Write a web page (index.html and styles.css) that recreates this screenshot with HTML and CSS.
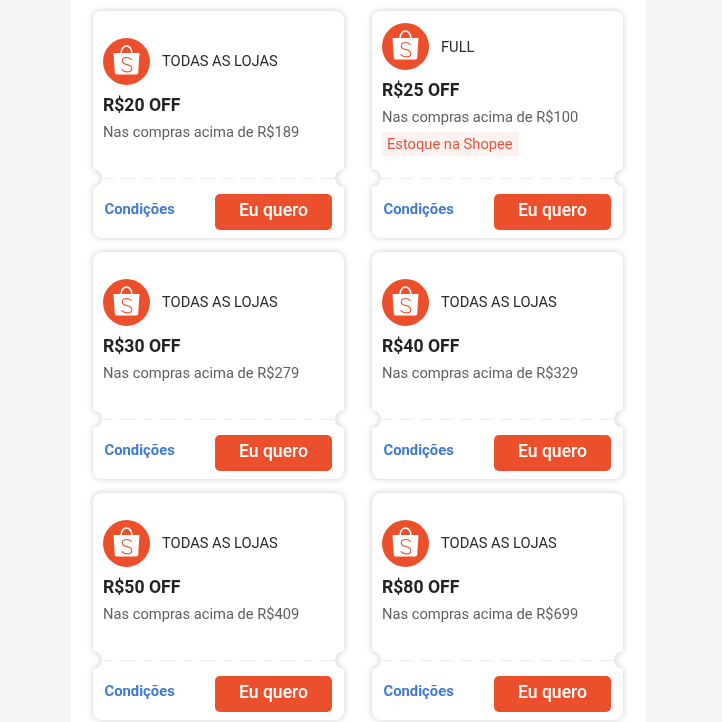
FILE: index.html
```html
<!DOCTYPE html>
<html lang="pt-BR">
<head>
<meta charset="UTF-8" />
<title>Cupons</title>
<link rel="stylesheet" href="styles.css">
</head>
<body>

<svg class="sprite" width="0" height="0" aria-hidden="true">
  <symbol id="shopeeLogo" viewBox="0 0 47 47">
    <circle cx="23.5" cy="23.5" r="23.5" fill="#ec4f2c"/>
    <path d="M10.500 15h26l-1.300 19.700a2 2 0 0 1-2 1.800H13.800a2 2 0 0 1-2-1.800z" fill="#fff"/>
    <path d="M18.200 15c0-4 2.300-7 5.300-7s5.300 3 5.300 7" fill="none" stroke="#fff" stroke-width="1.600"/>
    <path d="M28.200 21.400c-1-1.200-2.700-1.900-4.500-1.900-2.500 0-4.400 1.300-4.400 3.400 0 4.700 9.500 2.600 9.500 7.500 0 2.200-2.100 3.500-4.800 3.500-2 0-3.900-.8-5-2.200" fill="none" stroke="#ec4f2c" stroke-width="1.100" stroke-linecap="round"/>
  </symbol>
</svg>

<main class="page">
  <div class="coupon-grid">

    <article class="coupon">
      <div class="coupon-body">
        <div class="coupon-info">
          <div class="store"><svg class="logo"><use href="#shopeeLogo"/></svg><span>TODAS AS LOJAS</span></div>
          <h3>R$20 OFF</h3>
          <p>Nas compras acima de R$189</p>
        </div>
        <div class="coupon-actions"><a class="terms">Condições</a><button class="btn-want">Eu quero</button></div>
      </div>
    </article>

    <article class="coupon">
      <div class="coupon-body">
        <div class="coupon-info">
          <div class="store"><svg class="logo"><use href="#shopeeLogo"/></svg><span>FULL</span></div>
          <h3>R$25 OFF</h3>
          <p>Nas compras acima de R$100</p>
          <span class="tag">Estoque na Shopee</span>
        </div>
        <div class="coupon-actions"><a class="terms">Condições</a><button class="btn-want">Eu quero</button></div>
      </div>
    </article>

    <article class="coupon">
      <div class="coupon-body">
        <div class="coupon-info">
          <div class="store"><svg class="logo"><use href="#shopeeLogo"/></svg><span>TODAS AS LOJAS</span></div>
          <h3>R$30 OFF</h3>
          <p>Nas compras acima de R$279</p>
        </div>
        <div class="coupon-actions"><a class="terms">Condições</a><button class="btn-want">Eu quero</button></div>
      </div>
    </article>

    <article class="coupon">
      <div class="coupon-body">
        <div class="coupon-info">
          <div class="store"><svg class="logo"><use href="#shopeeLogo"/></svg><span>TODAS AS LOJAS</span></div>
          <h3>R$40 OFF</h3>
          <p>Nas compras acima de R$329</p>
        </div>
        <div class="coupon-actions"><a class="terms">Condições</a><button class="btn-want">Eu quero</button></div>
      </div>
    </article>

    <article class="coupon">
      <div class="coupon-body">
        <div class="coupon-info">
          <div class="store"><svg class="logo"><use href="#shopeeLogo"/></svg><span>TODAS AS LOJAS</span></div>
          <h3>R$50 OFF</h3>
          <p>Nas compras acima de R$409</p>
        </div>
        <div class="coupon-actions"><a class="terms">Condições</a><button class="btn-want">Eu quero</button></div>
      </div>
    </article>

    <article class="coupon">
      <div class="coupon-body">
        <div class="coupon-info">
          <div class="store"><svg class="logo"><use href="#shopeeLogo"/></svg><span>TODAS AS LOJAS</span></div>
          <h3>R$80 OFF</h3>
          <p>Nas compras acima de R$699</p>
        </div>
        <div class="coupon-actions"><a class="terms">Condições</a><button class="btn-want">Eu quero</button></div>
      </div>
    </article>

  </div>
</main>

</body>
</html>
```

FILE: styles.css
```css
html, body { margin: 0; height: 100%; overflow: hidden; }
body { background: #f5f5f5; font-family: Roboto, "Liberation Sans", sans-serif; color: #222; }
.sprite { position: absolute; }

.page { width: 575px; height: 722px; margin-left: 71px; background: #fff; padding: 11px 22px 0; box-sizing: border-box; }
.coupon-grid { display: grid; grid-template-columns: 251px 251px; column-gap: 28px; row-gap: 14px; }

/* sombra fica no pai porque o mask corta o filho */
.coupon { height: 227px; filter: drop-shadow(0 0 3px rgba(0,0,0,.2)); }
.coupon-body {
  height: 100%; background: #fff; border-radius: 8px;
  display: flex; flex-direction: column;
  -webkit-mask-image: radial-gradient(circle 9px at 0 167px, transparent 8.5px, #000 9px), radial-gradient(circle 9px at 100% 167px, transparent 8.5px, #000 9px);
  -webkit-mask-composite: source-in;
  mask-image: radial-gradient(circle 9px at 0 167px, transparent 8.5px, #000 9px), radial-gradient(circle 9px at 100% 167px, transparent 8.5px, #000 9px);
  mask-composite: intersect;
}

.coupon-info { height: 167px; box-sizing: border-box; padding: 0 10px 10px; display: flex; flex-direction: column; justify-content: center; align-items: flex-start; }
.store { display: flex; align-items: center; gap: 12px; font-size: 14.7px; color: #2a2a2a; }
.logo { width: 47px; height: 47px; flex: none; }
h3 { margin: 9px 0 0; font-size: 17.6px; line-height: 22px; font-weight: 700; color: #222; }
p { margin: 6px 0 0; font-size: 14.7px; line-height: 20px; color: #5f5f5f; }
.tag { margin-top: 5px; padding: 0 6px 0 5px; background: #fdf2f0; color: #e5533d; font-size: 14.7px; line-height: 24px; border-radius: 2px; }

.coupon-actions {
  flex: 1; display: flex; justify-content: space-between; align-items: center;
  padding: 7px 12px 0 11.5px;
  background: repeating-linear-gradient(90deg, #ececec 0 12px, transparent 12px 20px) 9px 0 / calc(100% - 18px) 1px no-repeat;
}
.terms { font-size: 14.8px; font-weight: 700; color: #3f7ad0; margin-top: -5px; }
.btn-want { width: 117px; height: 36px; border: none; border-radius: 5px; background: #ec4f2c; color: #fff; font-family: inherit; font-size: 17.6px; font-weight: 500; padding: 0 0 4px; }
```
